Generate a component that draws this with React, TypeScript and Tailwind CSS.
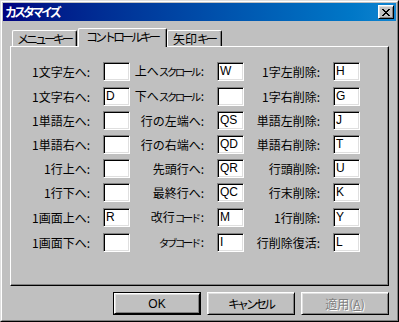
import React from "react";

type Row = [string, string, string, string, string, string];

const rows: Row[] = [
  ["1文字左へ:", "", "上へスクロール:", "W", "1字左削除:", "H"],
  ["1文字右へ:", "D", "下へスクロール:", "", "1字右削除:", "G"],
  ["1単語左へ:", "", "行の左端へ:", "QS", "単語左削除:", "J"],
  ["1単語右へ:", "", "行の右端へ:", "QD", "単語右削除:", "T"],
  ["1行上へ:", "", "先頭行へ:", "QR", "行頭削除:", "U"],
  ["1行下へ:", "", "最終行へ:", "QC", "行末削除:", "K"],
  ["1画面上へ:", "R", "改行コード:", "M", "1行削除:", "Y"],
  ["1画面下へ:", "", "タブコード:", "I", "行削除復活:", "L"],
];

const jp = "font-['Noto_Sans_CJK_JP',sans-serif]";

// the original bitmap font draws katakana narrower than kanji
const Jp = ({ text, small }: { text: string; small?: boolean }) => (
  <>
    {text.split(/([ァ-ヴー]+)/).map((part, i) =>
      i % 2 === 1 ? (
        <span
          key={i}
          className={small ? "text-[10.5px] tracking-[-2.5px] pr-[2px]" : "tracking-[-3px] pr-[1px]"}
        >
          {part}
        </span>
      ) : (
        <span key={i}>{part}</span>
      )
    )}
  </>
);

const Field = ({ value }: { value: string }) => (
  <div className="w-[27px] h-[19px] bg-white border border-t-[#808080] border-l-[#808080] border-b-white border-r-white shadow-[inset_1px_1px_0_#000,inset_-1px_-1px_0_#dfdfdf] pl-[2px] text-[12px] leading-[17px] font-['Liberation_Sans',Arial,sans-serif] text-black">
    {value}
  </div>
);

const Label = ({ text }: { text: string }) => (
  <div className={`${jp} text-[12px] leading-[19px] text-black text-right pr-[13px] whitespace-nowrap`}>
    <Jp text={text} small />
  </div>
);

const CloseGlyph = () => (
  <svg width="8" height="7" viewBox="0 0 8 7" shapeRendering="crispEdges">
    <path
      d="M0 0h2v1h-2zM6 0h2v1h-2zM1 1h2v1h-2zM5 1h2v1h-2zM2 2h4v1h-4zM3 3h2v1h-2zM2 4h4v1h-4zM1 5h2v1h-2zM5 5h2v1h-2zM0 6h2v1h-2zM6 6h2v1h-2z"
      fill="#000"
    />
  </svg>
);

const Button = ({
  children,
  isDefault,
  disabled,
}: {
  children: React.ReactNode;
  isDefault?: boolean;
  disabled?: boolean;
}) => {
  const face = (
    <div
      className={`h-full w-full flex items-center justify-center border border-t-white border-l-white border-b-black border-r-black shadow-[inset_1px_1px_0_#dfdfdf,inset_-1px_-1px_0_#808080] ${jp} text-[12px] ${
        disabled ? "text-[#808080] [text-shadow:1px_1px_0_#fff]" : "text-black"
      }`}
    >
      {children}
    </div>
  );
  return isDefault ? (
    <div className="w-[88px] h-[23px] border border-black">{face}</div>
  ) : (
    <div className="w-[88px] h-[23px]">{face}</div>
  );
};

const tabBase =
  "border-t border-l border-white border-r border-r-black rounded-tl-[2px] rounded-tr-[2px] shadow-[inset_-1px_0_0_#808080] flex justify-center whitespace-nowrap text-[12px] text-black";

export default function App() {
  return (
    <div className="w-[399px] h-[322px] bg-[#c0c0c0] border border-t-[#dfdfdf] border-l-[#dfdfdf] border-b-black border-r-black">
      <div className="h-full border border-t-white border-l-white border-b-[#808080] border-r-[#808080] p-[1px] flex flex-col">
        {/* title bar */}
        <div className="h-[18px] flex items-center justify-between bg-gradient-to-r from-[#000080] to-[#1084d0] pl-[2px] pr-[2px]">
          <span className={`${jp} text-[12px] font-bold text-white leading-none`}>
            <Jp text="カスタマイズ" />
          </span>
          <div className="w-[16px] h-[14px] flex items-center justify-center border border-t-white border-l-white border-b-black border-r-black shadow-[inset_1px_1px_0_#dfdfdf,inset_-1px_-1px_0_#808080] bg-[#c0c0c0]">
            <CloseGlyph />
          </div>
        </div>

        <div className="px-[7px] pt-[7px] flex flex-col">
          {/* tabs */}
          <div className="flex items-end h-[19px] pl-[2px] -mb-[1px] relative z-10">
            <div className={`h-[16px] w-[65px] mb-[1px] items-center leading-[14px] ${jp} ${tabBase}`}>
              <Jp text="メニューキー" />
            </div>
            <div className={`h-[19px] w-[89px] ml-[1px] bg-[#c0c0c0] items-start pt-[1px] leading-[14px] ${jp} ${tabBase}`}>
              <Jp text="コントロールキー" />
            </div>
            <div className={`h-[16px] w-[55px] mb-[1px] items-center leading-[14px] ${jp} ${tabBase}`}>
              <Jp text="矢印キー" />
            </div>
          </div>

          {/* panel */}
          <div className="w-[379px] h-[240px] border border-t-white border-l-white border-b-black border-r-black shadow-[inset_-1px_-1px_0_#808080]">
            <div className="grid grid-cols-[92px_27px_87px_27px_89px_27px] gap-y-[5px] pt-[14px] items-center">
              {rows.map((r, i) => (
                <React.Fragment key={i}>
                  <Label text={r[0]} />
                  <Field value={r[1]} />
                  <Label text={r[2]} />
                  <Field value={r[3]} />
                  <Label text={r[4]} />
                  <Field value={r[5]} />
                </React.Fragment>
              ))}
            </div>
          </div>

          {/* buttons */}
          <div className="flex justify-end gap-[6px] mt-[6px]">
            <Button isDefault>
              <span className="font-['Liberation_Sans',Arial,sans-serif]">OK</span>
            </Button>
            <Button>
              <Jp text="キャンセル" />
            </Button>
            <Button disabled>
              適用(<span className="underline">A</span>)
            </Button>
          </div>
        </div>
      </div>
    </div>
  );
}
